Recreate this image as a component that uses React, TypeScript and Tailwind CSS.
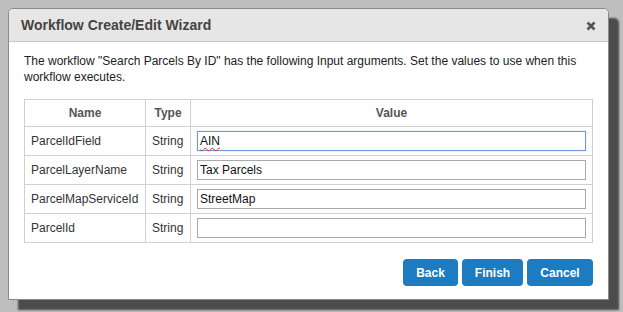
import React from "react";

const rows = [
  { name: "ParcelIdField", type: "String", value: "AIN", focus: true },
  { name: "ParcelLayerName", type: "String", value: "Tax Parcels" },
  { name: "ParcelMapServiceId", type: "String", value: "StreetMap" },
  { name: "ParcelId", type: "String", value: "" },
];

export default function App() {
  return (
    <div
      className="w-[623px] h-[312px] bg-[#bebebe] pt-[8px] pl-[8px] overflow-hidden"
      style={{ fontFamily: '"Liberation Sans", Arial, sans-serif' }}
    >
      <div className="w-[601px] h-[292px] bg-white border border-[#8a8a8a] rounded-t-[5px] shadow-[10px_10px_2px_rgba(70,70,70,0.95)] flex flex-col">
        <div className="h-[33px] bg-[#e6e6e6] border-b border-[#c8c8c8] rounded-t-[5px] flex items-center justify-between pl-[12px] pr-[12px] shrink-0">
          <span className="text-[14px] font-bold text-[#444]">Workflow Create/Edit Wizard</span>
          <svg width="10" height="10" viewBox="0 0 10 10" className="mt-[1px]">
            <path d="M1.5 1.5 L8.5 8.5 M8.5 1.5 L1.5 8.5" stroke="#555" strokeWidth="2.6" strokeLinecap="butt" />
          </svg>
        </div>
        <div className="px-[15px] pt-[11px] flex flex-col">
          <p className="text-[12px] leading-[16px] text-[#222]">
            The workflow "Search Parcels By ID" has the following Input arguments. Set the values to use when this workflow executes.
          </p>
          <table className="mt-[14px] w-[569px] border-collapse text-[12px] text-[#333]">
            <thead>
              <tr className="h-[27px]">
                <th className="w-[121px] border border-[#d0d0d0] font-bold text-[#555] text-center">Name</th>
                <th className="w-[45px] border border-[#d0d0d0] font-bold text-[#555] text-center">Type</th>
                <th className="border border-[#d0d0d0] font-bold text-[#555] text-center">Value</th>
              </tr>
            </thead>
            <tbody>
              {rows.map((r) => (
                <tr key={r.name} className="h-[29px]">
                  <td className="border border-[#d0d0d0] pl-[6px]">{r.name}</td>
                  <td className="border border-[#d0d0d0] pl-[6px]">{r.type}</td>
                  <td className="border border-[#d0d0d0] px-[6px]">
                    <div
                      className={
                        "h-[20px] w-full flex items-center pl-[2px] text-[12px] text-[#111] bg-white border " +
                        (r.focus
                          ? "border-[#6f9ad8] shadow-[0_0_1px_#9dbbe8]"
                          : "border-[#a9a9a9]")
                      }
                    >
                      {r.focus ? (
                        <span className="underline decoration-wavy decoration-[#e03030] decoration-[1px] underline-offset-[2px]">
                          {r.value}
                        </span>
                      ) : (
                        r.value
                      )}
                    </div>
                  </td>
                </tr>
              ))}
            </tbody>
          </table>
          <div className="mt-[16px] flex justify-end gap-[4px] pr-[-1px]">
            <button className="w-[55px] h-[27px] rounded-[4px] bg-[#1c7bc1] text-white font-bold text-[12px]">Back</button>
            <button className="w-[61px] h-[27px] rounded-[4px] bg-[#1c7bc1] text-white font-bold text-[12px]">Finish</button>
            <button className="w-[66px] h-[27px] rounded-[4px] bg-[#1c7bc1] text-white font-bold text-[12px]">Cancel</button>
          </div>
        </div>
      </div>
    </div>
  );
}
